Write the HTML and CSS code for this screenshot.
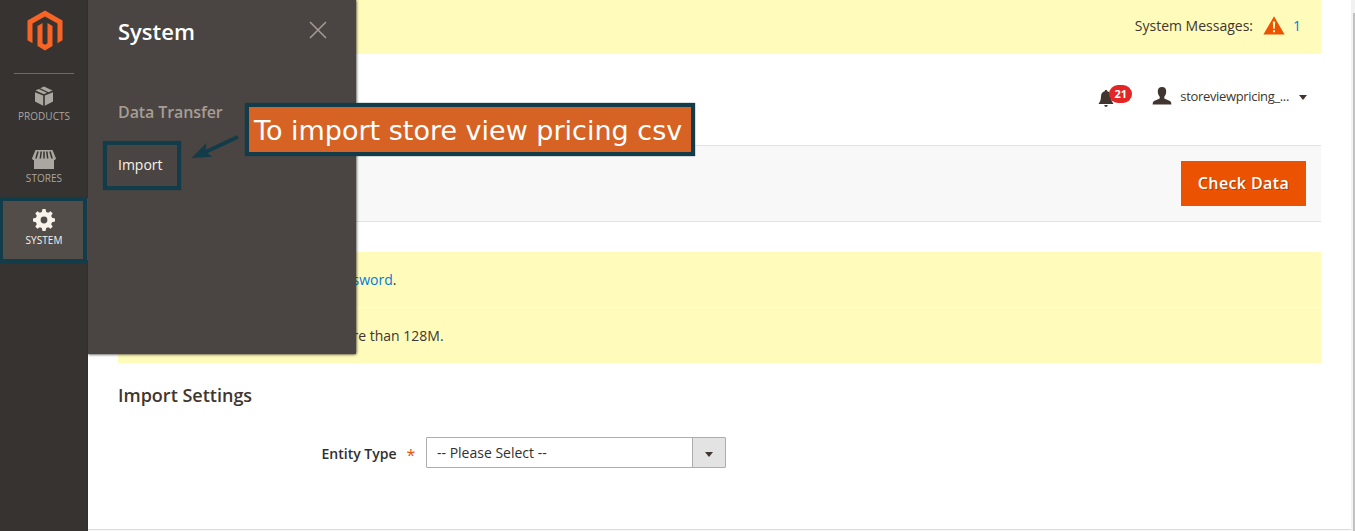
FILE: index.html
```html
<!DOCTYPE html>
<html lang="en">
<head>
<meta charset="utf-8">
<title>Import</title>
<link rel="stylesheet" href="styles.css">
</head>
<body>
<div class="app">
  <aside class="sidebar">
    <div class="logo">
      <svg width="36" height="42" viewBox="0 0 36 42" fill="#f76425"><path d="M18 .5 35.500 10.500V30.300L30.500 33.200V13.500L18 6.500 5.500 13.500V33.200L.5 30.300V10.500Z"/><path d="M10.500 16 15.500 13V33.200L18 34.700 20.500 33.200V13L25.500 16V36L18 40.400 10.500 36Z"/></svg>
    </div>
    <nav class="nav">
      <a class="nav-item">
        <svg width="20" height="22" viewBox="0 0 20 22" fill="#aaa6a0"><path d="M1 7.200 9.200 10.600V20.700L1 16.500ZM10.800 10.600 19 7.200V16.500L10.800 20.700ZM1.500 5.600 4.900 4 13 7.700 10 9.200ZM6.200 3.300 10 1.500 18.500 5.600 14.500 7.200Z"/></svg>
        <span>PRODUCTS</span>
      </a>
      <a class="nav-item">
        <svg width="24" height="22" viewBox="0 0 24 22" fill="#aaa6a0"><path d="M3.500 3H20.500L24 11.500Q23.500 13 22 13V22H2V13Q.5 13 0 11.500Z"/><path d="M6 4.500 3.900 11.500M9.200 4.500 8.300 11.500M12 4.500V11.500M14.800 4.500 15.700 11.500M18 4.500 20.100 11.500" stroke="#373330" stroke-width="1.500" fill="none"/></svg>
        <span>STORES</span>
      </a>
      <a class="nav-item active">
        <svg width="22" height="22" viewBox="-11 -11 22 22" fill="#f7f3eb"><path fill-rule="evenodd" d="M-2.200-8 -1.500-11H1.500L2.200-8 4.200-7.200 6.600-8.700 8.700-6.600 7.200-4.200 8-2.200 11-1.500V1.500L8 2.200 7.200 4.200 8.700 6.600 6.600 8.700 4.200 7.200 2.200 8 1.500 11H-1.500L-2.200 8 -4.200 7.200 -6.600 8.700 -8.700 6.600 -7.200 4.200 -8 2.200 -11 1.500V-1.500L-8-2.200 -7.200-4.200 -8.700-6.600 -6.600-8.700 -4.200-7.200ZM3.400 0A3.400 3.400 0 1 0-3.400 0A3.400 3.400 0 1 0 3.400 0Z"/></svg>
        <span>SYSTEM</span>
      </a>
    </nav>
  </aside>

  <main class="page">
    <div class="system-messages">
      <span>System Messages:</span>
      <svg class="warning" width="22" height="19" viewBox="0 0 22 19"><path d="M11 .3 21.600 18.600H.4Z" fill="#eb5202"/><path d="M9.800 5.500H12.200L11.800 12.800H10.200ZM10 14.200H12V16.200H10Z" fill="#fffbbb"/></svg>
      <a class="link">1</a>
    </div>
    <header class="header">
      <div class="bell">
        <svg width="17" height="18" viewBox="0 0 17 18" fill="#41362f"><path d="M8 0C9 0 9.200 .6 9.300 1.200C12 2 13 4 13 6.500C13 10 14 11.500 15.500 14H.5C2 11.500 3 10 3 6.500C3 4 4 2 6.700 1.200C6.800 .6 7 0 8 0ZM6.200 15H9.800Q9.500 17 8 17T6.200 15Z"/></svg>
        <span class="badge">21</span>
      </div>
      <div class="account">
        <svg width="20" height="18" viewBox="0 0 20 18" fill="#41362f"><path d="M10 0C13 0 14.400 2 14.200 4.800C14 7.300 13.300 8.600 12.300 9.700V11.500L18 14Q19.400 14.700 19.400 17.500H.6Q.6 14.700 2 14L7.700 11.500V9.700C6.700 8.600 6 7.300 5.800 4.800C5.600 2 7 0 10 0Z"/></svg>
        <span class="account-name">storeviewpricing_...</span>
        <i class="caret"></i>
      </div>
    </header>
    <div class="actions"><button class="primary">Check Data</button></div>
    <div class="notices">
      <div class="notice"><a class="link">sword</a>.</div>
      <div class="notice second">re than 128M.</div>
    </div>
    <h2 class="section-title">Import Settings</h2>
    <div class="field">
      <label class="label">Entity Type</label><span class="required">*</span>
      <div class="select"><span class="select-value">-- Please Select --</span><span class="select-toggle"><i class="caret small"></i></span></div>
    </div>
    <footer class="footer"></footer>
  </main>
  <div class="scrollbar"><div class="thumb"></div></div>
</div>

<section class="submenu">
  <div class="submenu-head">
    <strong class="submenu-title">System</strong>
    <svg width="18" height="18" viewBox="0 0 18 18" stroke="#a79d95" stroke-width="1.500"><path d="M1 1 17 17M17 1 1 17"/></svg>
  </div>
  <div class="group-title">Data Transfer</div>
  <a class="submenu-link">Import</a>
</section>

<div class="mark mark-system"></div>
<div class="mark mark-import"></div>
<svg class="arrow" width="52" height="30" viewBox="0 0 52 30"><path d="M46.500 5.500 15 20.300" stroke="#133c4a" stroke-width="3.800" stroke-linecap="round"/><path d="M1.500 26 16.500 11 15.500 20 22.500 24.700Z" fill="#133c4a"/></svg>
<div class="callout">To import store view pricing csv</div>
</body>
</html>
```
FILE: styles.css
```css
* { box-sizing: border-box; }
body {
  margin: 0;
  height: 531px;
  overflow: hidden;
  position: relative;
  font: 14px/19px "Open Sans", "Noto Sans", sans-serif;
  color: #41362f;
  background: #fff;
}
.app { display: flex; height: 531px; }
.sidebar {
  width: 88px;
  flex: none;
  background: #373330;
  background-image: linear-gradient(to right, transparent 86px, #322e2b 88px);
}
.logo {
  height: 74px;
  margin: 0 14px;
  padding: 10px 0 0 1px;
  text-align: center;
  border-bottom: 1px solid #736963;
}
.nav-item {
  display: flex;
  flex-direction: column;
  align-items: center;
  height: 62px;
  padding-top: 11px;
  font-size: 10px;
  line-height: 14px;
  color: #aaa6a0;
}
.nav-item span { margin-top: 2px; letter-spacing: .05px; }
.nav-item.active { background: #524d49; color: #f7f3eb; }

.page {
  flex: 1;
  display: flex;
  flex-direction: column;
  padding: 0 30px;
}
.system-messages {
  display: flex;
  align-items: center;
  justify-content: flex-end;
  height: 54px;
  padding: 0 20px 3px 0;
  background: #fffbbb;
}
.warning { margin: 0 8px 0 10px; }
.link { color: #007bdb; }
.header {
  display: flex;
  justify-content: flex-end;
  height: 91px;
  padding: 33px 14px 0 0;
}
.bell { display: flex; height: 20px; margin-right: 20px; }
.bell svg { margin-top: 3px; }
.badge {
  width: 23px;
  height: 18px;
  margin: -2px 0 0 -6px;
  border-radius: 9px;
  background: #e22626;
  color: #fff;
  font-size: 11px;
  font-weight: 700;
  line-height: 18px;
  text-align: center;
}
.account { display: flex; height: 20px; }
.account-name { margin: 0 10px 0 8px; font-size: 13px; letter-spacing: -.34px; }
.caret {
  width: 0;
  height: 0;
  margin-top: 8px;
  border: 4px solid transparent;
  border-top: 5px solid #41362f;
  border-bottom: 0;
}
.actions {
  display: flex;
  align-items: flex-start;
  justify-content: flex-end;
  height: 77px;
  padding: 15px 15px 0;
  background: #f8f8f8;
  border: solid #e3e3e3;
  border-width: 1px 0;
}
.primary {
  width: 125px;
  height: 45px;
  padding: 0;
  border: 0;
  background: #eb5202;
  color: #fff;
  font: 600 16px/43px "Open Sans", sans-serif;
  letter-spacing: .4px;
  text-shadow: 1px 1px 0 rgba(0, 0, 0, .25);
}
.notices { margin-top: 30px; }
.notice { height: 56px; padding: 18px 0 0 234.500px; background: #fffbbb; border-bottom: 1px solid #fffdea; }
.notice.second { height: 55px; border: 0; }
.section-title { margin: 20px 0 0; font-size: 18px; font-weight: 600; line-height: 24px; }
.field { display: flex; margin-top: 30px; }
.label { width: 278.500px; padding-top: 7px; text-align: right; font-weight: 600; color: #303030; }
.required { width: 29.500px; padding: 9px 0 0 10px; color: #eb5202; font-size: 16px; }
.select { display: flex; width: 300px; height: 31px; border: 1px solid #adadad; border-radius: 1px; color: #303030; }
.select-value { flex: 1; padding: 5px 10px; }
.select-toggle { width: 33px; border-left: 1px solid #adadad; background: #e3e3e3; padding: 5px 0 0 12px; }
.caret.small { display: block; margin-top: 9px; }
.footer { height: 2px; margin: auto -30px 0; background: #f8f8f8; border-top: 1px solid #dcdcdc; }
.scrollbar { width: 4px; padding: 13px 0 0 2px; background: #f1f1f1; }
.thumb { height: 100%; background: #c1c1c1; }

.submenu {
  position: absolute;
  left: 88px;
  top: 0;
  width: 268px;
  height: 354px;
  padding: 17px 29px 0 30px;
  background: #4a4542;
  box-shadow: 0 0 3px #000;
  clip-path: inset(0 -6px -6px 0);
}
.submenu-head { display: flex; justify-content: space-between; }
.submenu-head svg { margin-top: 4px; }
.submenu-title { color: #fff; font-size: 22px; font-weight: 600; line-height: 28px; }
.group-title { margin-top: 55px; color: #a79d95; font-size: 16px; font-weight: 600; line-height: 24px; letter-spacing: -.1px; }
.submenu-link { display: block; margin-top: 31px; color: #f7f3eb; }

.mark { position: absolute; border: 4px solid #133c4a; box-shadow: 0 0 1px #133c4a; }
.mark-system { left: -1px; top: 197px; width: 88px; height: 66px; }
.mark-import { left: 103px; top: 141px; width: 78px; height: 49px; }
.arrow { position: absolute; left: 190px; top: 132px; }
.callout {
  position: absolute;
  left: 245px;
  top: 103px;
  width: 450px;
  height: 53px;
  padding-left: 5px;
  border: 4px solid #133c4a;
  box-shadow: 0 0 1px #133c4a;
  background: #d66324;
  color: #fff;
  font: 27px/48px "DejaVu Sans", sans-serif;
  white-space: nowrap;
}
```
